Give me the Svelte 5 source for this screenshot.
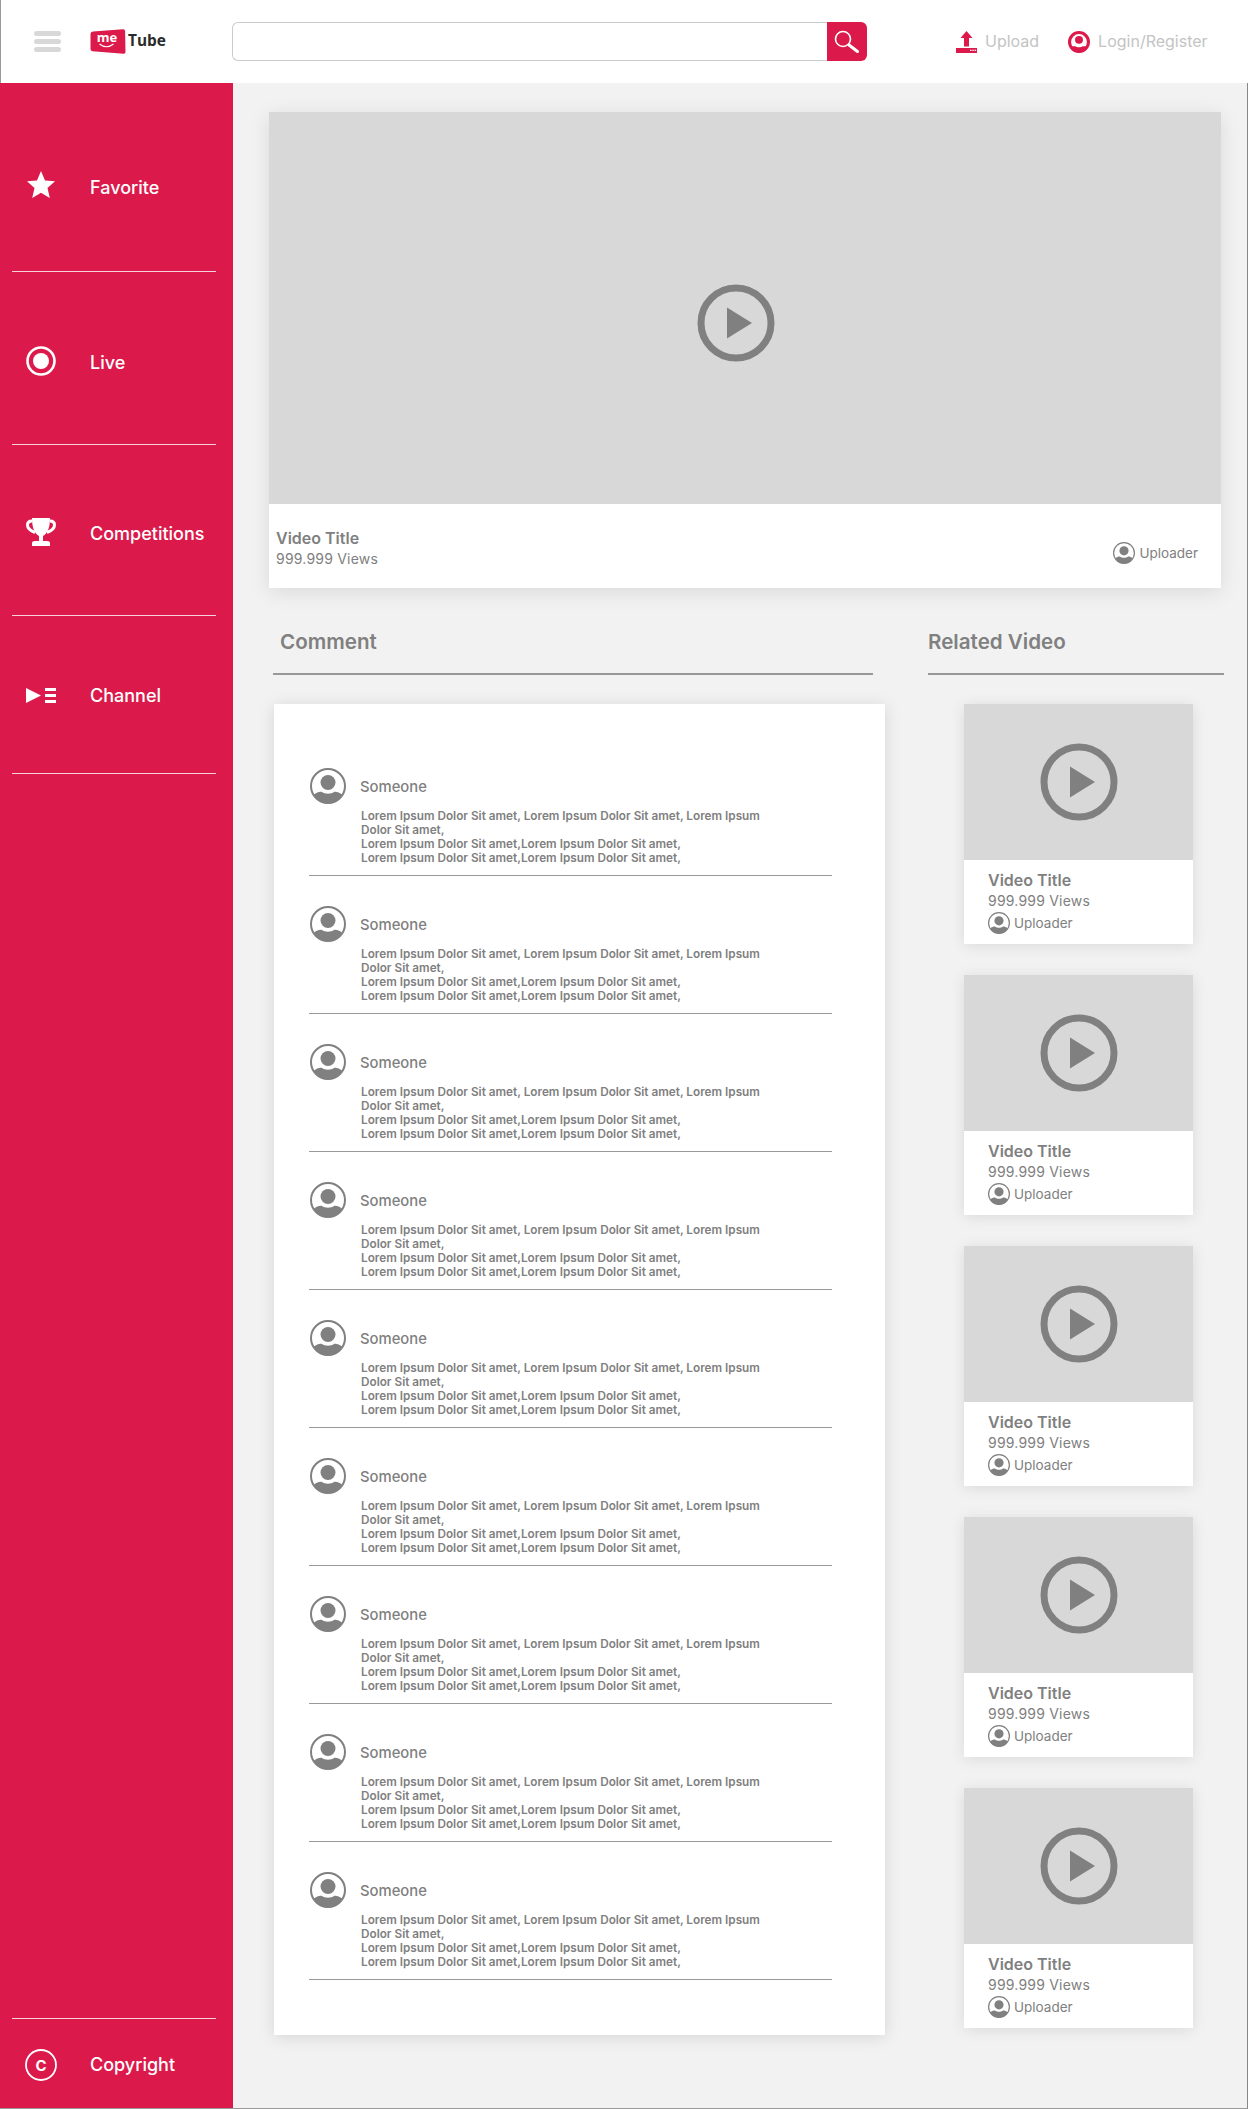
<script>
	const navTop = [
		{ label: "Favorite", icon: "star" },
		{ label: "Live", icon: "live" },
		{ label: "Competitions", icon: "trophy" },
		{ label: "Channel", icon: "channel" }
	];
	const comments = Array(9).fill("Someone");
	const related = Array(5).fill("Video Title");
</script>

{#snippet person(size)}
	<svg class="person" width={size} height={size} viewBox="0 0 36 36">
		<circle cx="18" cy="18" r="17" fill="none" stroke="#808080" stroke-width="2" />
		<circle cx="18" cy="14.5" r="7.5" fill="#808080" />
		<path d="M3.500 27 C7 24 10 23.500 12 24 C15 26.200 21 26.200 24 24 C26 23.500 29 24 32.500 27 C29.500 32.500 24 35.500 18 35.500 C12 35.500 6.500 32.500 3.500 27 Z" fill="#808080" />
	</svg>
{/snippet}

{#snippet play()}
	<svg class="play" width="78" height="78" viewBox="0 0 78 78">
		<circle cx="39" cy="39" r="35" fill="none" stroke="#808080" stroke-width="7" />
		<path d="M30 23.500 L55 39 L30 54.500 Z" fill="#808080" />
	</svg>
{/snippet}

<div class="page">
	<header class="topbar">
		<div class="burger"><span></span><span></span><span></span></div>
		<div class="logo">
			<svg width="36" height="25" viewBox="0 0 36 25">
				<path d="M3 2.500 L33 0.300 Q35 0.200 35.100 2 L35.500 23 Q35.500 24.900 33.500 24.700 L2.500 22.300 Q0.500 22.100 0.500 20 L0.500 5 Q0.500 2.700 3 2.500 Z" fill="#db1a4b" />
				<text x="17" y="13" text-anchor="middle" class="logo-me">me</text>
				<path d="M9.500 15 Q16.500 20.500 23.500 15" fill="none" stroke="#fff" stroke-width="1.200" />
			</svg>
			<span>Tube</span>
		</div>
		<div class="search">
			<div class="search-input"></div>
			<div class="search-btn">
				<svg width="28" height="28" viewBox="0 0 28 28">
					<circle cx="10" cy="11" r="7.500" fill="none" stroke="#fff" stroke-width="1.600" />
					<path d="M16 17 L24.500 23.500" stroke="#fff" stroke-width="3" stroke-linecap="round" />
				</svg>
			</div>
		</div>
		<div class="actions">
			<div class="action upload">
				<svg width="21" height="22" viewBox="0 0 21 22">
					<path d="M10.500 0 L16.500 7 L13 7 L13 15.500 L8 15.500 L8 7 L4.500 7 Z" fill="#db1a4b" />
					<rect y="17" width="21" height="5" fill="#db1a4b" />
					<rect x="14" y="18.700" width="1.500" height="1.200" fill="#fff" />
					<rect x="16.300" y="18.700" width="1.500" height="1.200" fill="#fff" />
					<rect x="18.600" y="18.700" width="1.500" height="1.200" fill="#fff" />
				</svg>
				<span>Upload</span>
			</div>
			<div class="action login">
				<svg width="22" height="22" viewBox="0 0 36 36">
					<circle cx="18" cy="18" r="15.500" fill="none" stroke="#db1a4b" stroke-width="5" />
					<circle cx="18" cy="14.500" r="6.500" fill="#db1a4b" />
					<path d="M3.500 27 C7 25 10 24.500 12 25 C15 27.200 21 27.200 24 25 C26 24.500 29 25 32.500 27 C29.500 32.500 24 35.500 18 35.500 C12 35.500 6.500 32.500 3.500 27 Z" fill="#db1a4b" />
				</svg>
				<span>Login/Register</span>
			</div>
		</div>
	</header>

	<div class="body">
		<aside class="sidebar">
			<nav>
				{#each navTop as item}
					<div class="nav-item">
						<span class="nav-icon {item.icon}">
							{#if item.icon === "star"}
								<svg width="30" height="28" viewBox="0 0 30 28">
									<path d="M15 0 L19 9.500 L29 10.300 L21.500 17 L23.800 27 L15 21.800 L6.200 27 L8.500 17 L1 10.300 L11 9.500 Z" fill="#fff" />
								</svg>
							{:else if item.icon === "live"}
								<svg width="30" height="30" viewBox="0 0 30 30">
									<circle cx="15" cy="15" r="13.500" fill="none" stroke="#fff" stroke-width="2.600" />
									<circle cx="15" cy="15" r="8" fill="#fff" />
								</svg>
							{:else if item.icon === "trophy"}
								<svg width="30" height="28" viewBox="0 0 30 28">
									<path d="M6 0 L24 0 C24 9 22 15 17 18 L17 23 L21 23 Q24 23 24 25 L24 28 L6 28 L6 25 Q6 23 9 23 L13 23 L13 18 C8 15 6 9 6 0 Z" fill="#fff" />
									<path d="M6 3 C3 3 1.500 4.500 1.500 7 C1.500 10.500 5 13 9 14.500 M24 3 C27 3 28.500 4.500 28.500 7 C28.500 10.500 25 13 21 14.500" fill="none" stroke="#fff" stroke-width="3" />
								</svg>
							{:else}
								<svg width="30" height="15" viewBox="0 0 30 15">
									<path d="M0 0 L15 7.500 L0 15 Z" fill="#fff" />
									<rect x="19" y="0" width="11" height="3" fill="#fff" />
									<rect x="19" y="6" width="11" height="3" fill="#fff" />
									<rect x="19" y="12" width="11" height="3" fill="#fff" />
								</svg>
							{/if}
						</span>
						<span class="nav-label">{item.label}</span>
					</div>
				{/each}
			</nav>
			<div class="copyright">
				<svg width="32" height="32" viewBox="0 0 32 32">
					<circle cx="16" cy="16" r="15" fill="none" stroke="#fff" stroke-width="1.800" />
					<text x="16" y="21.500" text-anchor="middle" class="copy-c">C</text>
				</svg>
				<span class="nav-label">Copyright</span>
			</div>
		</aside>

		<main class="content">
			<section class="hero">
				<div class="hero-thumb">{@render play()}</div>
				<div class="hero-info">
					<div>
						<div class="title">Video Title</div>
						<div class="views">999.999 Views</div>
					</div>
					<div class="uploader">{@render person(22)}<span>Uploader</span></div>
				</div>
			</section>

			<div class="columns">
				<section class="comments">
					<h2>Comment</h2>
					<div class="comment-card">
						{#each comments as name}
							<article class="comment">
								<div class="comment-head">
									{@render person(36)}
									<span class="name">{name}</span>
								</div>
								<p>
									Lorem Ipsum Dolor Sit amet, Lorem Ipsum Dolor Sit amet, Lorem Ipsum<br />
									Dolor Sit amet,<br />
									Lorem Ipsum Dolor Sit amet,Lorem Ipsum Dolor Sit amet,<br />
									Lorem Ipsum Dolor Sit amet,Lorem Ipsum Dolor Sit amet,
								</p>
							</article>
						{/each}
					</div>
				</section>

				<section class="related">
					<h2>Related Video</h2>
					<div class="related-list">
						{#each related as title}
							<div class="video-card">
								<div class="video-thumb">{@render play()}</div>
								<div class="video-info">
									<div class="title">{title}</div>
									<div class="views">999.999 Views</div>
									<div class="uploader">{@render person(22)}<span>Uploader</span></div>
								</div>
							</div>
						{/each}
					</div>
				</section>
			</div>
		</main>
	</div>
</div>

<style>
	:global(body) {
		margin: 0;
		background: #f2f2f2;
	}

	.page {
		width: 1248px;
		height: 2109px;
		display: flex;
		flex-direction: column;
		font-family: Inter, "Liberation Sans", sans-serif;
		color: #808080;
		overflow: hidden;
	}

	.topbar {
		height: 83px;
		flex: none;
		box-sizing: border-box;
		background: #fff;
		display: flex;
		align-items: center;
		border-left: 1px solid #999;
	}

	.burger {
		width: 27px;
		margin-left: 33px;
		display: flex;
		flex-direction: column;
		gap: 3px;
	}

	.burger span {
		height: 5px;
		border-radius: 3px;
		background: #d8d8d8;
	}

	.logo {
		width: 76px;
		flex: none;
		margin-left: 29px;
		display: flex;
		align-items: center;
		gap: 2px;
	}

	.logo svg {
		display: block;
		flex: none;
	}

	.logo-me {
		font: 700 13px "Open Sans", sans-serif;
		fill: #fff;
	}

	.logo span {
		font: 700 15.4px "Open Sans", sans-serif;
		color: #2b2b2b;
		margin-top: -2px;
	}

	.search {
		margin-left: 66px;
		width: 635px;
		height: 39px;
		display: flex;
	}

	.search-input {
		flex: 1;
		background: #fff;
		border: 1px solid #ccc;
		border-right: 0;
		border-radius: 6px 0 0 6px;
	}

	.search-btn {
		width: 40px;
		background: #db1a4b;
		border-radius: 0 6px 6px 0;
		display: flex;
		align-items: center;
		justify-content: center;
	}

	.actions {
		margin-left: 89px;
		display: flex;
		gap: 29px;
	}

	.action {
		display: flex;
		align-items: center;
		gap: 8px;
		font-size: 16px;
		color: #c4c4c4;
	}

	.action span {
		margin-top: -2px;
	}

	.body {
		flex: 1;
		display: flex;
		min-height: 0;
	}

	.sidebar {
		width: 233px;
		flex: none;
		background: #db1a4b;
		color: #fff;
		display: flex;
		flex-direction: column;
		justify-content: space-between;
		border-bottom: 1px solid #999;
		box-sizing: border-box;
	}

	.nav-item {
		display: flex;
		align-items: center;
		box-sizing: border-box;
		margin: 0 17px 0 12px;
		border-bottom: 1px solid #f7d1db;
	}

	.nav-item:nth-child(1) {
		height: 189px;
		padding-top: 20px;
	}

	.nav-item:nth-child(2) {
		height: 173px;
		padding-top: 8px;
	}

	.nav-item:nth-child(3) {
		height: 171px;
		padding-top: 6px;
	}

	.nav-item:nth-child(4) {
		height: 158px;
		padding-top: 1px;
	}

	.nav-icon {
		width: 78px;
		flex: none;
		padding-left: 14px;
		box-sizing: border-box;
		display: flex;
	}

	.nav-icon.star {
		margin-top: -5px;
	}

	.nav-icon.live {
		margin-top: -2px;
	}

	.nav-icon.trophy {
		margin-top: -3px;
	}

	.nav-label {
		font-size: 18px;
		font-weight: 500;
	}

	.copy-c {
		font: 700 15px Inter, sans-serif;
		fill: #fff;
	}

	.copyright {
		margin: 0 17px 0 12px;
		height: 90px;
		border-top: 1px solid #f7d1db;
		display: flex;
		align-items: center;
		box-sizing: border-box;
		padding: 2px 0 0 13px;
		gap: 33px;
	}

	.content {
		flex: 1;
		min-width: 0;
		box-sizing: border-box;
		padding: 29px 0 0 36px;
		border-right: 1px solid #888;
		border-bottom: 1px solid #999;
	}

	.hero {
		width: 952px;
		background: #fff;
		box-shadow: 0 4px 20px rgba(0, 0, 0, 0.1);
	}

	.hero-thumb {
		height: 392px;
		box-sizing: border-box;
		padding: 29px 18px 0 0;
		background: #d8d8d8;
		display: flex;
		align-items: center;
		justify-content: center;
	}

	.hero-info {
		height: 84px;
		box-sizing: border-box;
		padding: 23px 23px 0 7px;
		display: flex;
		justify-content: space-between;
	}

	.title {
		font-size: 16px;
		font-weight: 600;
		line-height: 22px;
	}

	.views {
		font-size: 14px;
		line-height: 20px;
		letter-spacing: 0.2px;
	}

	.uploader {
		display: flex;
		align-items: center;
		gap: 4px;
		font-size: 13.5px;
		line-height: 22px;
	}

	.hero-info .uploader {
		align-self: flex-start;
		margin-top: 15px;
	}

	.person {
		display: block;
		flex: none;
	}

	.columns {
		display: flex;
		margin-top: 36px;
		margin-left: 4px;
	}

	h2 {
		margin: 0;
		font-size: 20.6px;
		font-weight: 600;
		line-height: 26px;
		padding: 5px 0 18px;
		border-bottom: 2px solid #999;
	}

	.comments h2 {
		padding-left: 7px;
	}

	.comments {
		width: 600px;
	}

	.comment-card {
		width: 611px;
		height: 1331px;
		box-sizing: border-box;
		margin: 29px 0 0 1px;
		padding: 64px 53px 0 35px;
		background: #fff;
		box-shadow: 0 2px 16px rgba(0, 0, 0, 0.12);
	}

	.comment {
		height: 108px;
		margin-bottom: 30px;
		box-sizing: border-box;
		border-bottom: 1px solid #999;
	}

	.comment-head {
		display: flex;
		align-items: center;
		gap: 14px;
		height: 36px;
		padding-left: 1px;
	}

	.name {
		font-size: 14.8px;
		font-weight: 500;
		margin-top: 2px;
	}

	.comment p {
		margin: 5px 0 0 52px;
		font-size: 11.75px;
		font-weight: 600;
		line-height: 14px;
		white-space: nowrap;
	}

	.related {
		width: 296px;
		margin-left: 55px;
	}

	.related-list {
		display: flex;
		flex-direction: column;
		gap: 31px;
		margin: 29px 0 0 36px;
	}

	.video-card {
		width: 229px;
		height: 240px;
		background: #fff;
		box-shadow: 0 2px 14px rgba(0, 0, 0, 0.1);
	}

	.video-thumb {
		height: 156px;
		background: #d8d8d8;
		display: flex;
		align-items: center;
		justify-content: center;
	}

	.video-info {
		padding: 10px 0 0 24px;
	}

	.video-info .title {
		line-height: 21px;
	}

	.video-info .uploader {
		margin-top: 1px;
	}
</style>
